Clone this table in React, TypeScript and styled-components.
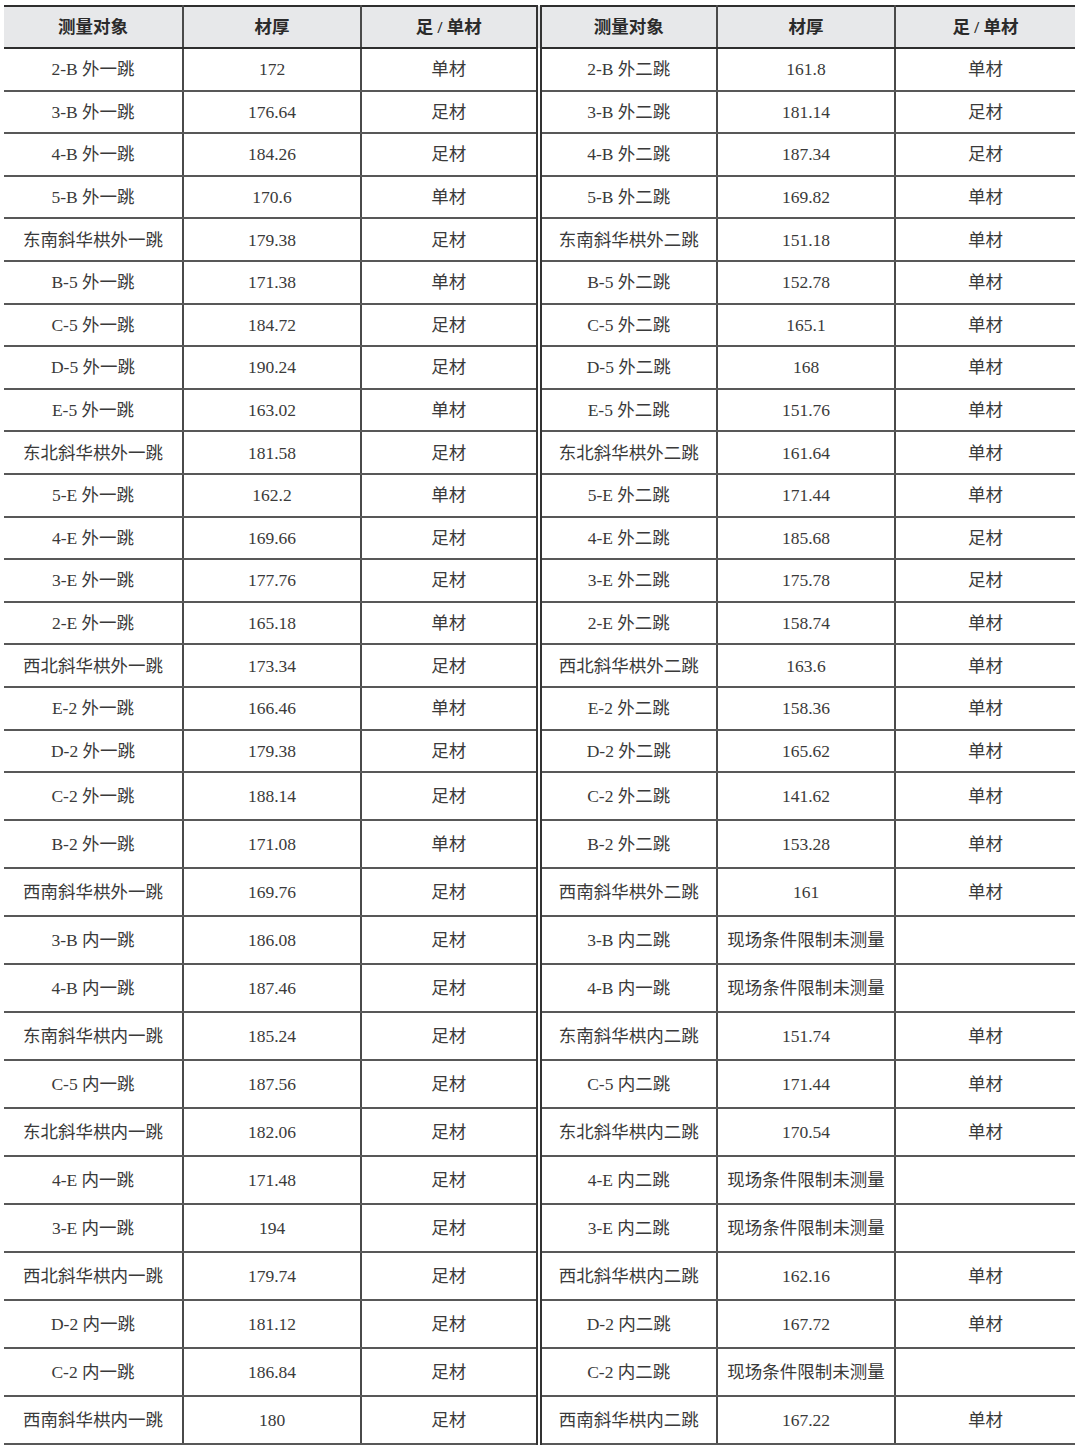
import React from "react";
import styled, { createGlobalStyle } from "styled-components";

const GlobalStyle = createGlobalStyle`
  html, body {
    margin: 0;
    padding: 0;
    background: #ffffff;
  }
  body {
    font-family: "Liberation Serif", "Noto Sans CJK SC", serif;
    color: #333333;
  }
`;

const Page = styled.div`
  width: 1080px;
  padding: 5px 5px 0 4px;
  box-sizing: border-box;
`;

const Table = styled.table`
  width: 1071px;
  border-collapse: collapse;
  table-layout: fixed;
  border-top: 2px solid #2e2e2e;
  border-bottom: 2px solid #2e2e2e;
`;

const HeadCell = styled.th<{ $split?: boolean; $last?: boolean }>`
  height: 40px;
  padding: 0;
  background: #e7e8ea;
  font-size: 17.5px;
  line-height: 20px;
  font-weight: 700;
  color: #2b2b2b;
  text-align: center;
  vertical-align: middle;
  border-bottom: 2px solid #2e2e2e;
  border-right: ${(p) =>
    p.$last ? "none" : p.$split ? "6px double #333" : "2px solid #4a4a4a"};
`;

const Row = styled.tr<{ $tall?: boolean }>`
  height: ${(p) => (p.$tall ? "48px" : "42.6px")};
`;

const Cell = styled.td<{ $split?: boolean; $last?: boolean }>`
  padding: 0;
  font-size: 17.5px;
  line-height: 20px;
  color: #3a3a3a;
  text-align: center;
  vertical-align: middle;
  white-space: nowrap;
  border-bottom: 2px solid #585858;
  border-right: ${(p) =>
    p.$last ? "none" : p.$split ? "6px double #333" : "2px solid #4a4a4a"};
`;

const widths = [179, 178, 177.5, 178.5, 178, 180];

const heads = ["测量对象", "材厚", "足 / 单材", "测量对象", "材厚", "足 / 单材"];

const rows: string[][] = [
  ["2-B 外一跳", "172", "单材", "2-B 外二跳", "161.8", "单材"],
  ["3-B 外一跳", "176.64", "足材", "3-B 外二跳", "181.14", "足材"],
  ["4-B 外一跳", "184.26", "足材", "4-B 外二跳", "187.34", "足材"],
  ["5-B 外一跳", "170.6", "单材", "5-B 外二跳", "169.82", "单材"],
  ["东南斜华栱外一跳", "179.38", "足材", "东南斜华栱外二跳", "151.18", "单材"],
  ["B-5 外一跳", "171.38", "单材", "B-5 外二跳", "152.78", "单材"],
  ["C-5 外一跳", "184.72", "足材", "C-5 外二跳", "165.1", "单材"],
  ["D-5 外一跳", "190.24", "足材", "D-5 外二跳", "168", "单材"],
  ["E-5 外一跳", "163.02", "单材", "E-5 外二跳", "151.76", "单材"],
  ["东北斜华栱外一跳", "181.58", "足材", "东北斜华栱外二跳", "161.64", "单材"],
  ["5-E 外一跳", "162.2", "单材", "5-E 外二跳", "171.44", "单材"],
  ["4-E 外一跳", "169.66", "足材", "4-E 外二跳", "185.68", "足材"],
  ["3-E 外一跳", "177.76", "足材", "3-E 外二跳", "175.78", "足材"],
  ["2-E 外一跳", "165.18", "单材", "2-E 外二跳", "158.74", "单材"],
  ["西北斜华栱外一跳", "173.34", "足材", "西北斜华栱外二跳", "163.6", "单材"],
  ["E-2 外一跳", "166.46", "单材", "E-2 外二跳", "158.36", "单材"],
  ["D-2 外一跳", "179.38", "足材", "D-2 外二跳", "165.62", "单材"],
  ["C-2 外一跳", "188.14", "足材", "C-2 外二跳", "141.62", "单材"],
  ["B-2 外一跳", "171.08", "单材", "B-2 外二跳", "153.28", "单材"],
  ["西南斜华栱外一跳", "169.76", "足材", "西南斜华栱外二跳", "161", "单材"],
  ["3-B 内一跳", "186.08", "足材", "3-B 内二跳", "现场条件限制未测量", ""],
  ["4-B 内一跳", "187.46", "足材", "4-B 内一跳", "现场条件限制未测量", ""],
  ["东南斜华栱内一跳", "185.24", "足材", "东南斜华栱内二跳", "151.74", "单材"],
  ["C-5 内一跳", "187.56", "足材", "C-5 内二跳", "171.44", "单材"],
  ["东北斜华栱内一跳", "182.06", "足材", "东北斜华栱内二跳", "170.54", "单材"],
  ["4-E 内一跳", "171.48", "足材", "4-E 内二跳", "现场条件限制未测量", ""],
  ["3-E 内一跳", "194", "足材", "3-E 内二跳", "现场条件限制未测量", ""],
  ["西北斜华栱内一跳", "179.74", "足材", "西北斜华栱内二跳", "162.16", "单材"],
  ["D-2 内一跳", "181.12", "足材", "D-2 内二跳", "167.72", "单材"],
  ["C-2 内一跳", "186.84", "足材", "C-2 内二跳", "现场条件限制未测量", ""],
  ["西南斜华栱内一跳", "180", "足材", "西南斜华栱内二跳", "167.22", "单材"],
];

export default function App() {
  return (
    <Page>
      <GlobalStyle />
      <Table>
        <colgroup>
          {widths.map((w, i) => (
            <col key={i} style={{ width: `${w}px` }} />
          ))}
        </colgroup>
        <thead>
          <tr>
            {heads.map((h, i) => (
              <HeadCell key={i} $split={i === 2} $last={i === 5}>
                {h}
              </HeadCell>
            ))}
          </tr>
        </thead>
        <tbody>
          {rows.map((r, ri) => (
            <Row key={ri} $tall={ri >= 17}>
              {r.map((c, ci) => (
                <Cell key={ci} $split={ci === 2} $last={ci === 5}>
                  {c}
                </Cell>
              ))}
            </Row>
          ))}
        </tbody>
      </Table>
    </Page>
  );
}
